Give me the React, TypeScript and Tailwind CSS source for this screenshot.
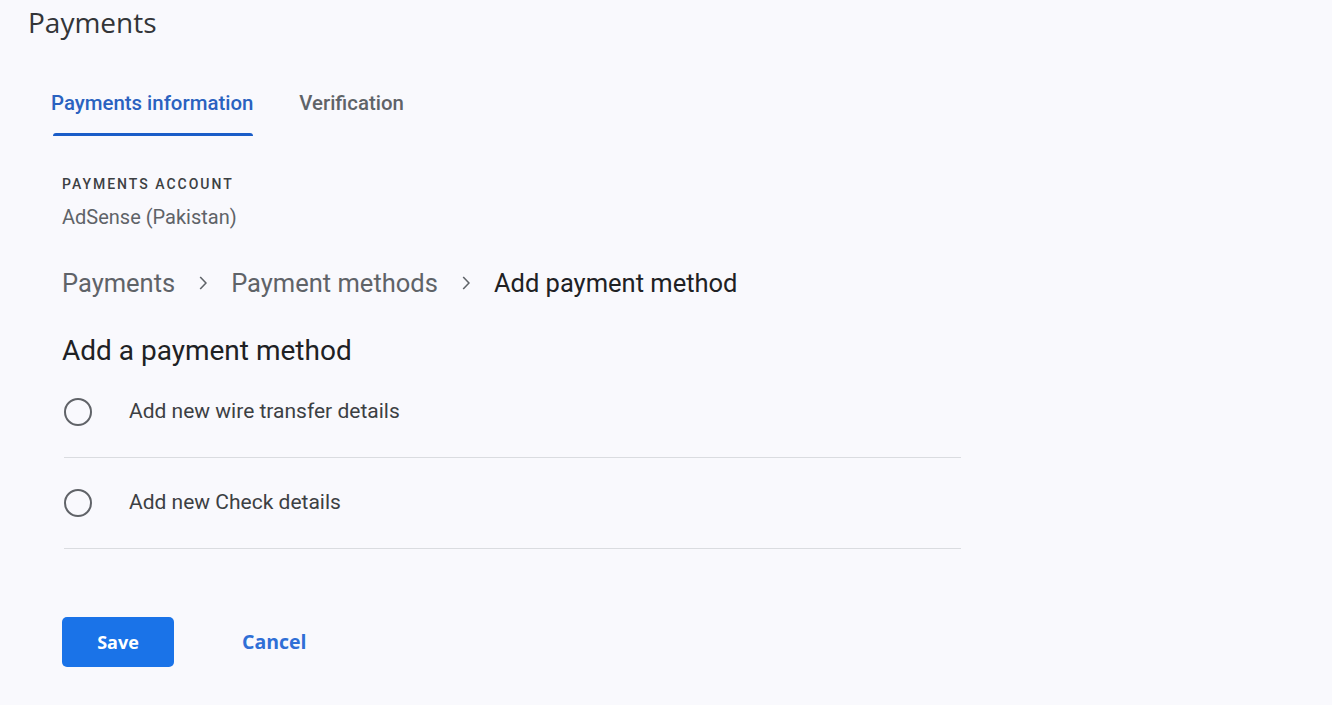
import React from "react";

function Radio() {
  return (
    <span className="inline-block w-[28px] h-[28px] rounded-full border-[2px] border-[#606368] shrink-0" />
  );
}

function Chevron() {
  return (
    <svg width="8" height="14" viewBox="0 0 8 14" className="mx-[24px] text-[#5f6368]">
      <path d="M1.2 1 7 7l-5.8 6" fill="none" stroke="currentColor" strokeWidth="1.6" />
    </svg>
  );
}

const gsans = { fontFamily: "'Open Sans', Roboto, sans-serif" };

export default function App() {
  return (
    <div
      className="w-[1332px] h-[705px] bg-[#f9f9fd] text-[#3c4043] overflow-hidden"
      style={{ fontFamily: "Roboto, 'Open Sans', sans-serif" }}
    >
      <div className="pl-[28px] pt-[5px]">
        <h1 className="text-[28px] leading-[34px] text-[#333538]" style={gsans}>Payments</h1>
      </div>

      <div className="flex pl-[51px] mt-[52px] gap-[46px]">
        <div className="flex flex-col items-start">
          <span className="text-[20.4px] leading-[24px] text-[#2a62c0] font-medium">Payments information</span>
          <span className="mt-[18px] ml-[2px] h-[3px] w-[200px] rounded-t-[3px] bg-[#1a5dc8]" />
        </div>
        <span className="text-[20.4px] leading-[24px] text-[#5f6368] font-medium">Verification</span>
      </div>

      <div className="pl-[62px] mt-[38px]">
        <div className="text-[14px] leading-[20px] tracking-[2px] font-medium text-[#3c4043]">PAYMENTS ACCOUNT</div>
        <div className="mt-[11px] text-[20px] leading-[24px] text-[#5f6368]">AdSense (Pakistan)</div>

        <div className="flex items-center mt-[38px] text-[25.5px] leading-[32px]">
          <span className="text-[#5f6368]">Payments</span>
          <Chevron />
          <span className="text-[#5f6368]">Payment methods</span>
          <Chevron />
          <span className="text-[#202124]">Add payment method</span>
        </div>

        <h2 className="mt-[34px] text-[28px] leading-[36px] text-[#202124]">Add a payment method</h2>

        <div className="w-[897px] ml-[2px] mt-[-2px]">
          <div className="flex items-center h-[91px] border-b border-[#dadce0]">
            <Radio />
            <span className="ml-[37px] text-[21px] text-[#3c4043]">Add new wire transfer details</span>
          </div>
          <div className="flex items-center h-[91px] border-b border-[#dadce0]">
            <Radio />
            <span className="ml-[37px] text-[21px] text-[#3c4043]">Add new Check details</span>
          </div>
        </div>

        <div className="flex items-center mt-[68px]" style={gsans}>
          <button className="w-[112px] h-[50px] rounded-[5px] bg-[#1a73e8] text-white text-[18px] font-bold">Save</button>
          <button className="ml-[68px] text-[19.5px] font-bold text-[#2f6fd6]">Cancel</button>
        </div>
      </div>
    </div>
  );
}
